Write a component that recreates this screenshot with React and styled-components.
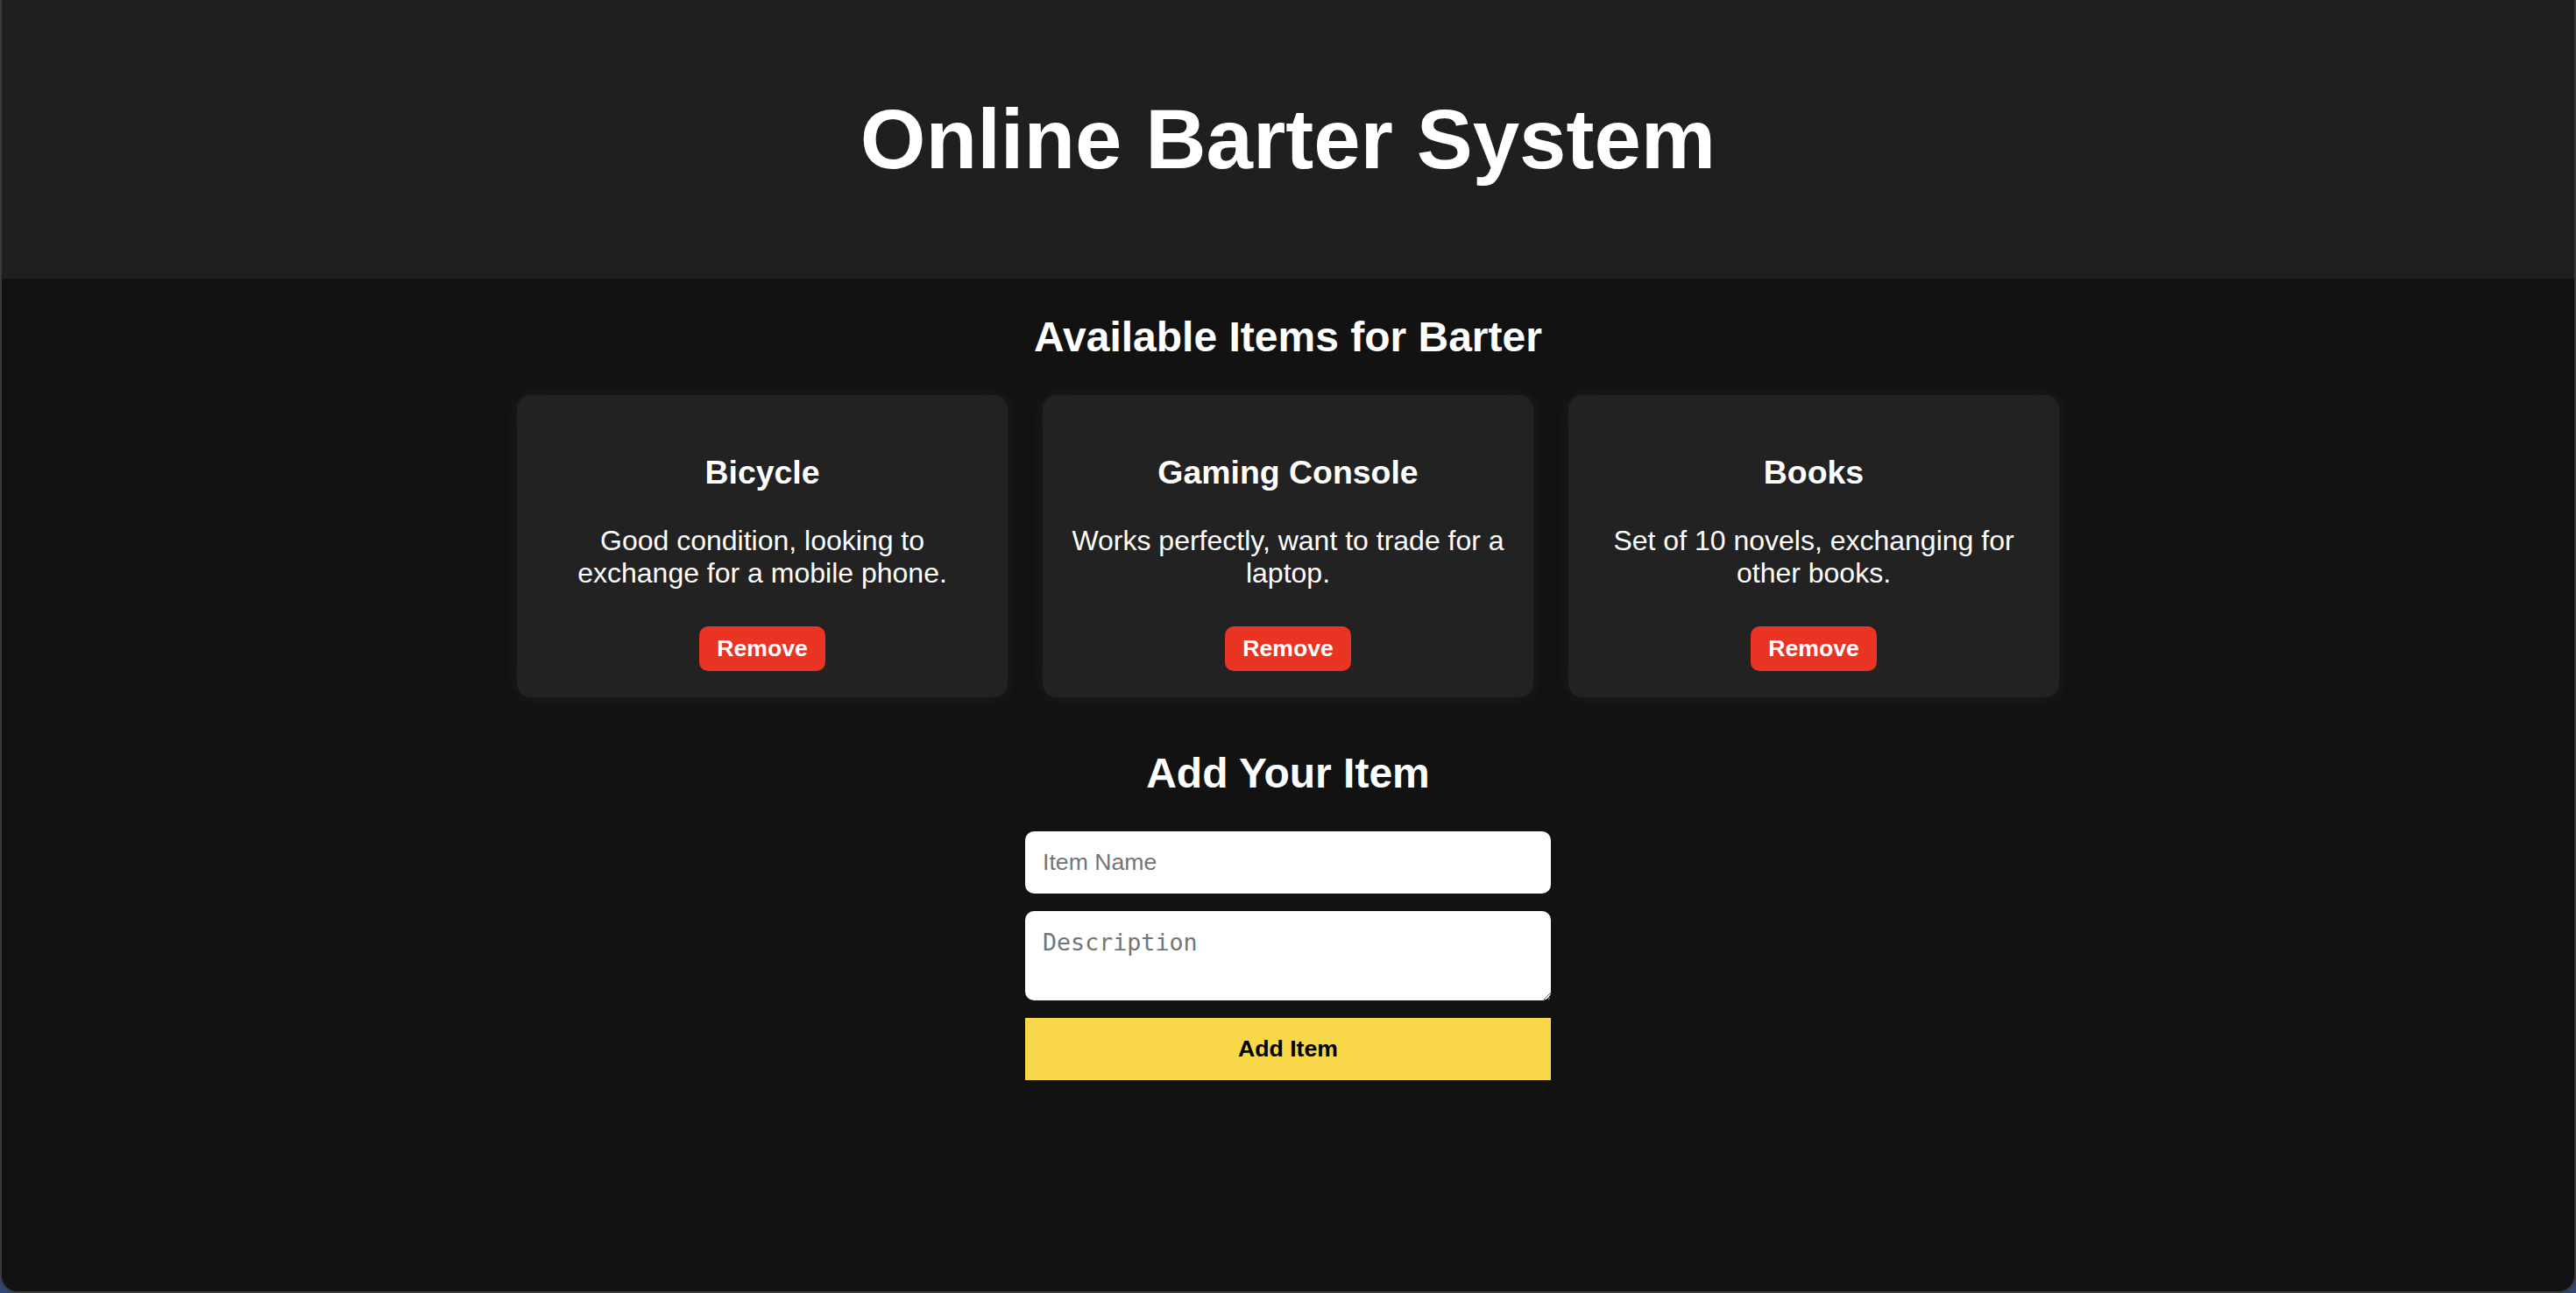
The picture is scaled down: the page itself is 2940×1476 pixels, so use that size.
import { useState } from 'react';
import styled, { createGlobalStyle } from 'styled-components';

const initialItems = [
  { id: 1, name: 'Bicycle', description: 'Good condition, looking to exchange for a mobile phone.' },
  { id: 2, name: 'Gaming Console', description: 'Works perfectly, want to trade for a laptop.' },
  { id: 3, name: 'Books', description: 'Set of 10 novels, exchanging for other books.' },
];

const App = () => {
  const [items, setItems] = useState(initialItems);
  const [name, setName] = useState('');
  const [description, setDescription] = useState('');

  const removeItem = (id) => setItems(items.filter((item) => item.id !== id));

  const addItem = (e) => {
    e.preventDefault();
    if (!name.trim()) return;
    setItems([...items, { id: Date.now(), name, description }]);
    setName('');
    setDescription('');
  };

  return (
    <>
      <GlobalStyle />
      <StyledWindow>
        <StyledHeader>
          <h1>Online Barter System</h1>
        </StyledHeader>
        <StyledMain>
          <SectionTitle>Available Items for Barter</SectionTitle>
          <ItemGrid>
            {items.map((item) => (
              <ItemCard key={item.id}>
                <h3>{item.name}</h3>
                <p>{item.description}</p>
                <RemoveButton onClick={() => removeItem(item.id)}>Remove</RemoveButton>
              </ItemCard>
            ))}
          </ItemGrid>
          <SectionTitle>Add Your Item</SectionTitle>
          <ItemForm onSubmit={addItem}>
            <TextInput
              type="text"
              placeholder="Item Name"
              value={name}
              onChange={(e) => setName(e.target.value)}
            />
            <TextArea
              rows={2}
              placeholder="Description"
              value={description}
              onChange={(e) => setDescription(e.target.value)}
            />
            <AddButton type="submit">Add Item</AddButton>
          </ItemForm>
        </StyledMain>
      </StyledWindow>
    </>
  );
};

/**
 * Styled Components
 */
const GlobalStyle = createGlobalStyle`
  html, body {
    margin: 0;
    padding: 0;
    background: #34437a;
  }
  body {
    font-family: "Liberation Sans", Arial, sans-serif;
  }
  * {
    box-sizing: border-box;
  }
`;

const StyledWindow = styled.div`
  min-height: 100vh;
  background: #121212;
  border: 2px solid #3a3a3a;
  border-top: none;
  border-radius: 0 0 20px 20px;
  overflow: hidden;
  color: #ffffff;
`;

const StyledHeader = styled.header`
  background: #1f1f1f;
  padding: 40px;
  text-align: center;
  h1 {
    font-size: 96px;
    font-weight: bold;
    margin: 64px 0;
  }
`;

const StyledMain = styled.main`
  text-align: center;
  padding-bottom: 40px;
`;

const SectionTitle = styled.h2`
  font-size: 48px;
  font-weight: bold;
  margin: 39px 0;
`;

const ItemGrid = styled.div`
  display: flex;
  justify-content: center;
  gap: 40px;
  padding-bottom: 20px;
`;

const ItemCard = styled.div`
  width: 560px;
  padding: 30px;
  background: #222222;
  border-radius: 16px;
  box-shadow: 0 0 20px rgba(255, 255, 255, 0.06);
  h3 {
    font-size: 37.44px;
    font-weight: bold;
    margin: 37.44px 0;
  }
  p {
    font-size: 32px;
    margin: 32px 0 0;
  }
`;

const RemoveButton = styled.button`
  margin-top: 42px;
  padding: 10px 20px;
  background: #e93323;
  color: #ffffff;
  border: none;
  border-radius: 10px;
  font-family: "Liberation Sans", Arial, sans-serif;
  font-size: 26.67px;
  font-weight: bold;
  cursor: pointer;
`;

const ItemForm = styled.form`
  width: 600px;
  margin: 0 auto;
  display: flex;
  flex-direction: column;
  gap: 20px;
`;

const TextInput = styled.input`
  width: 100%;
  padding: 20px;
  border: none;
  border-radius: 10px;
  background: #ffffff;
  font-family: "Liberation Sans", Arial, sans-serif;
  font-size: 26.67px;
  &::placeholder {
    color: #757575;
  }
`;

const TextArea = styled.textarea`
  width: 100%;
  padding: 20px;
  border: none;
  border-radius: 10px;
  background: #ffffff;
  font-family: "DejaVu Sans Mono", monospace;
  font-size: 26.67px;
  resize: vertical;
  &::placeholder {
    color: #757575;
  }
`;

const AddButton = styled.button`
  width: 100%;
  padding: 20px;
  background: #f8d748;
  color: #000000;
  border: none;
  font-family: "Liberation Sans", Arial, sans-serif;
  font-size: 26.67px;
  font-weight: bold;
  cursor: pointer;
`;

export default App;
